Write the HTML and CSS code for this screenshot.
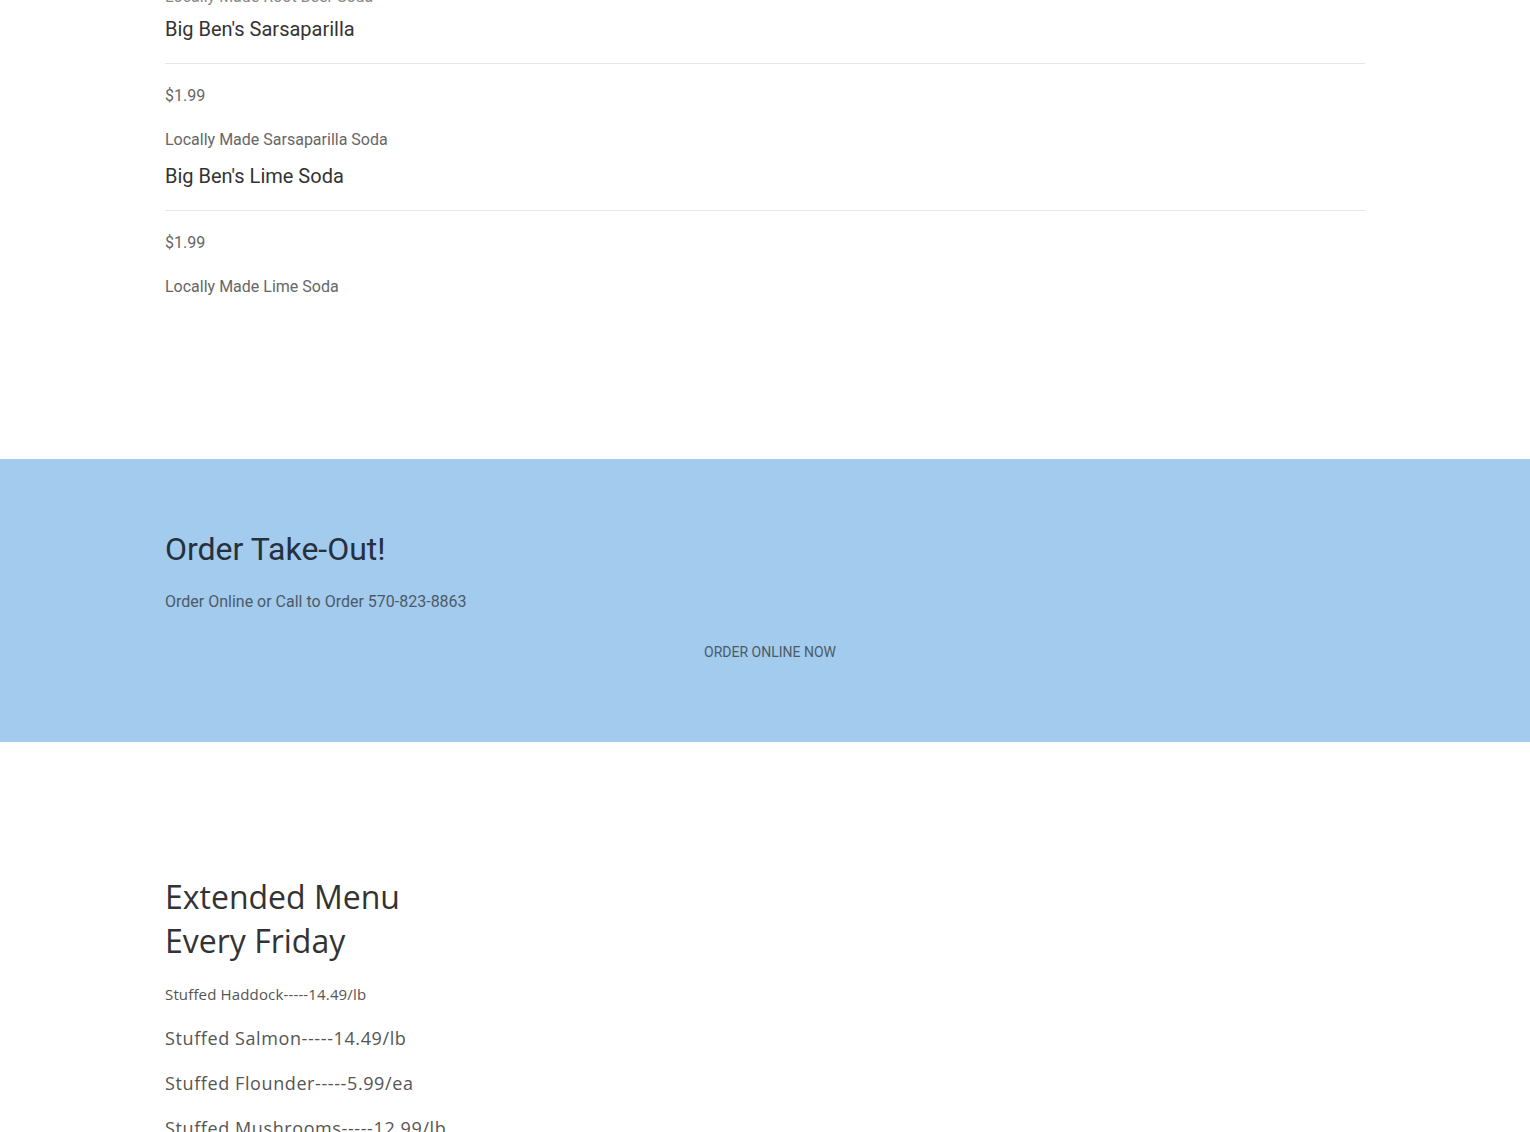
FILE: index.html
```html
<!DOCTYPE html>
<html>
<head>
<meta charset="utf-8">
<link rel="stylesheet" href="styles.css">
</head>
<body>
<section class="menu">
  <div class="container">
    <p class="desc partial">Locally Made Root Beer Soda</p>
    <div class="item">
      <h3 class="item-title">Big Ben's Sarsaparilla</h3>
      <p class="price">$1.99</p>
      <p class="desc">Locally Made Sarsaparilla Soda</p>
    </div>
    <div class="item">
      <h3 class="item-title">Big Ben's Lime Soda</h3>
      <p class="price">$1.99</p>
      <p class="desc">Locally Made Lime Soda</p>
    </div>
  </div>
</section>
<section class="takeout">
  <div class="container">
    <h2 class="takeout-title">Order Take-Out!</h2>
    <p class="takeout-text">Order Online or Call to Order 570-823-8863</p>
    <div class="btn-row"><a class="btn" href="#">ORDER ONLINE NOW</a></div>
  </div>
</section>
<section class="extended">
  <div class="container">
    <h2 class="ext-title">Extended Menu<br>Every Friday</h2>
    <p class="ext-item small">Stuffed Haddock-----14.49/lb</p>
    <p class="ext-item">Stuffed Salmon-----14.49/lb</p>
    <p class="ext-item">Stuffed Flounder-----5.99/ea</p>
    <p class="ext-item">Stuffed Mushrooms-----12.99/lb</p>
  </div>
</section>
</body>
</html>
```
FILE: styles.css
```css
* { box-sizing: border-box; }
html, body { margin: 0; padding: 0; background: #fff; }
body { font-family: Roboto, "Liberation Sans", sans-serif; overflow: hidden; }
.container { width: 1200px; margin: 0 auto; }
p, h2, h3 { margin: 0; font-weight: 400; }

.menu { padding-bottom: 161px; margin-top: -14px; }
.desc { font-size: 16px; line-height: 22px; color: #666; }
.partial { margin-bottom: 9px; color: #888; }
.item { margin-bottom: 13px; }
.item:last-child { margin-bottom: 0; }
.item-title {
  font-size: 20px; line-height: 24px; color: #333;
  padding-bottom: 22px; border-bottom: 1px solid #e6e6e6;
}
.price { font-size: 16px; line-height: 22px; color: #666; margin-top: 21px; margin-bottom: 22px; }

.takeout { background: #a2cbee; padding: 70px 0 80px; }
.takeout-title { font-size: 32px; line-height: 40px; color: #25313d; }
.takeout-text { font-size: 16px; line-height: 22px; color: #4d5a66; margin-top: 22px; }
.btn-row { display: flex; justify-content: center; margin-top: 29px; padding-left: 10px; }
.btn { font-size: 14px; line-height: 20px; color: #4d5a66; text-decoration: none; }

.extended { padding-top: 133px; }
.ext-title { font-family: "Open Sans", sans-serif; font-size: 32px; line-height: 44px; color: #333; }
.ext-item { font-family: "Open Sans", sans-serif; font-size: 18px; line-height: 27px; color: #555; margin-top: 18px; letter-spacing: 0.6px; }
.ext-item.small { font-size: 15px; line-height: 22px; margin-top: 20px; letter-spacing: 0.15px; }
.ext-item.small + .ext-item { margin-top: 20px; }
```
